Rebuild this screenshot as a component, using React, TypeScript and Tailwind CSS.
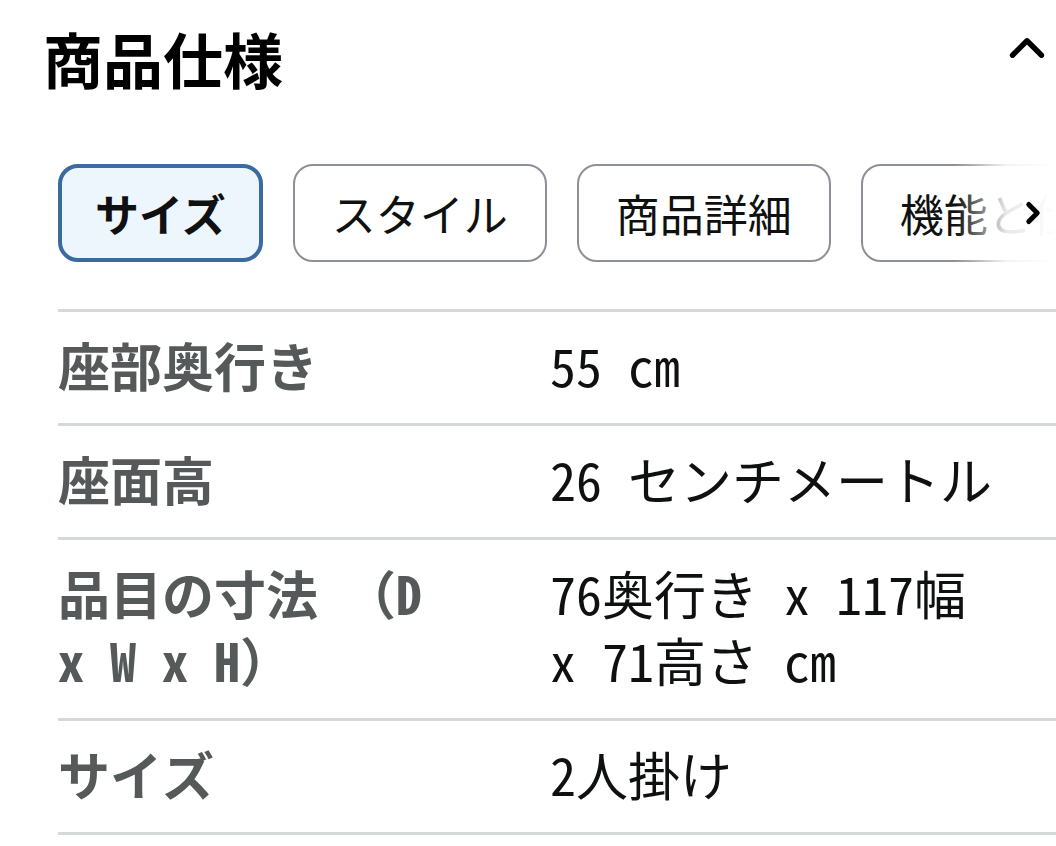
import { ChevronUp, ChevronRight } from "lucide-react";

const FONT = {
  fontFamily: '"Noto Sans Mono CJK JP", "Noto Sans CJK JP", monospace',
};

const TABS = ["サイズ", "スタイル", "商品詳細", "機能と仕様"];

const ROWS = [
  { label: "座部奥行き", value: "55 cm" },
  { label: "座面高", value: "26 センチメートル" },
  { label: "品目の寸法 （D x W x H）", value: "76奥行き x 117幅 x 71高さ cm" },
  { label: "サイズ", value: "2人掛け" },
];

export default function App() {
  return (
    <div className="min-h-[846px] w-[1056px] overflow-hidden bg-white" style={FONT}>
      {/* Header */}
      <div className="flex items-center justify-between pl-[43px] pr-0 pt-[18px]">
        <h2 className="font-['Noto_Sans_CJK_JP',sans-serif] text-[60px] font-bold leading-[80px] text-black">
          商品仕様
        </h2>
        <ChevronUp className="-mt-[20px] h-[58px] w-[58px] text-black" strokeWidth={2.2} />
      </div>

      {/* Tabs */}
      <div className="relative mt-[66px] pl-[58px]">
        <div className="flex gap-[30px] overflow-hidden whitespace-nowrap">
          {TABS.map((t, i) => (
            <div
              key={t}
              className={
                i === 0
                  ? "flex h-[98px] shrink-0 items-center rounded-[20px] border-[4px] border-[#3b6aa0] bg-[#edf6fd] px-[33px] font-['Noto_Sans_CJK_JP',sans-serif] text-[44px] font-semibold text-[#0f1111]"
                  : "flex h-[98px] shrink-0 items-center rounded-[20px] border-2 border-[#8d9096] bg-white px-[37px] font-['Noto_Sans_CJK_JP',sans-serif] text-[44px] text-[#0f1111]"
              }
            >
              {t}
            </div>
          ))}
        </div>
        <div className="absolute right-0 top-0 flex h-[98px] w-[100px] items-center justify-end bg-gradient-to-r from-white/0 via-white/90 to-white pr-[6px]">
          <ChevronRight className="h-[34px] w-[34px] text-black" strokeWidth={3.5} />
        </div>
      </div>

      {/* Spec table */}
      <div className="ml-[58px] mt-[47px] border-t-[3px] border-[#d5d9d9]">
        {ROWS.map((r) => (
          <div
            key={r.label}
            className="grid grid-cols-[492px_1fr] border-b-[3px] border-[#d5d9d9] pb-[25px] pt-[19px] text-[52px] leading-[67px]"
          >
            <div className="pr-[90px] font-bold text-[#565959]">{r.label}</div>
            <div className="pr-[40px] text-[#0f1111]">{r.value}</div>
          </div>
        ))}
      </div>
    </div>
  );
}
